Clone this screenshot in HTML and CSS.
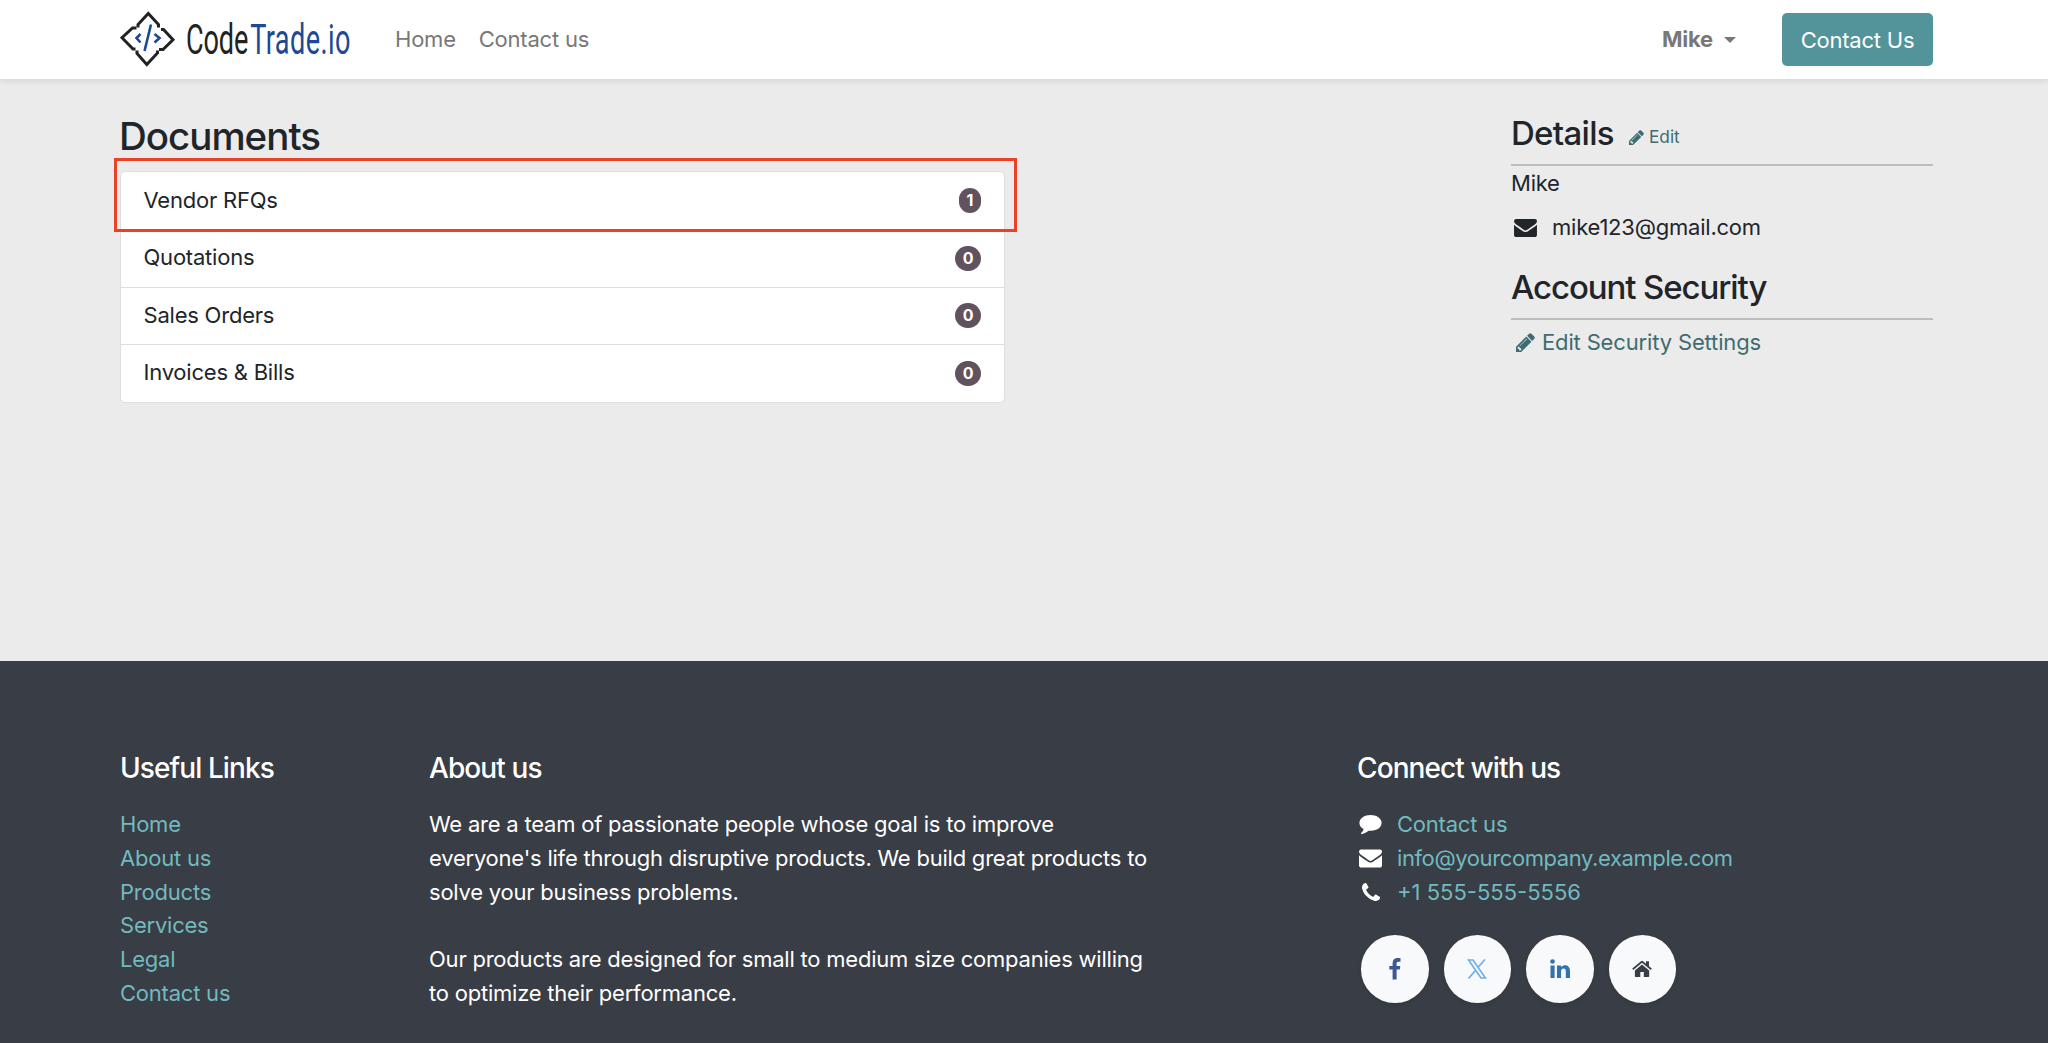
FILE: index.html
```html
<!DOCTYPE html>
<html lang="en">
<head>
  <meta charset="UTF-8">
  <title>My Portal | CodeTrade.io</title>
  <link rel="stylesheet" href="styles.css">
</head>
<body>

  <!-- shared icons -->
  <svg class="sprite">
    <symbol id="pencil" viewBox="0 0 1536 1536">
      <path d="M363 1408l91-91-235-235-91 91v107h128v128h107zM886 480q0-22-22-22-10 0-17 7l-542 542q-7 7-7 17 0 22 22 22 10 0 17-7l542-542q7-7 7-17zM832 288l416 416-832 832H0v-416zM1515 384q0 53-37 90l-166 166-416-416 166-165q36-38 90-38 53 0 91 38l235 234q37 39 37 91z"/>
    </symbol>
    <symbol id="envelope" viewBox="0 0 1792 1408">
      <path d="M1792 454v794q0 66-47 113t-113 47H160q-66 0-113-47T0 1248V454q44 49 101 87 362 246 497 345 57 42 92.500 65.500t94.500 48 110 24.500h2q51 0 110-24.500t94.500-48 92.500-65.500q170-123 498-345 57-39 100-87zM1792 160q0 79-49 151t-122 123q-376 261-468 325-10 7-42.500 30.500t-54 38-52 32.500-57.500 27-50 9h-2q-23 0-50-9t-57.500-27-52-32.500-54-38T639 759q-91-64-262-182.500T172 434q-62-42-117-115.500T0 182q0-78 41.500-130T160 0h1472q65 0 112.500 47t47.500 113z"/>
    </symbol>
  </svg>

  <header class="navbar">
    <a href="#" class="logo">
      <svg width="232" height="60" viewBox="0 0 232 60">
        <g fill="none" stroke="#222" stroke-width="3">
          <path d="M18 18.500V15.500L28.300 4.500L38.500 15.500V18.500"/>
          <path d="M41 20.500H43.500L53 30.700L43 40.500H39"/>
          <path d="M37.500 41.500V44L26.800 55.500L17 44.500V41.500"/>
          <path d="M15.500 40H13L2 28.700L12.500 19H16.500"/>
        </g>
        <g fill="none" stroke="#1d4896" stroke-width="2.600">
          <path d="M20.500 25L16.500 29L20.500 33.500"/>
          <path d="M31 15.500L24.500 42"/>
          <path d="M34.500 25L39.500 29L34.500 33.500"/>
        </g>
        <g transform="translate(66 44.500) scale(.63 1)">
          <text class="logo-text" x="0" y="0" textLength="99" fill="#222">Code</text>
          <text class="logo-text" x="102" y="0" textLength="159" fill="#1d4896">Trade.io</text>
        </g>
      </svg>
    </a>
    <nav class="menu">
      <a href="#">Home</a>
      <a href="#">Contact us</a>
    </nav>
    <a href="#" class="user">Mike</a>
    <a href="#" class="contact-btn">Contact Us</a>
  </header>

  <main class="portal">
    <section class="documents">
      <h2>Documents</h2>
      <div class="doc-list">
        <a href="#" class="highlight">Vendor RFQs <span class="badge">1</span></a>
        <a href="#">Quotations <span class="badge">0</span></a>
        <a href="#">Sales Orders <span class="badge">0</span></a>
        <a href="#">Invoices &amp; Bills <span class="badge">0</span></a>
      </div>
    </section>

    <aside class="details">
      <h3>Details <a href="#" class="edit"><svg><use href="#pencil"/></svg>Edit</a></h3>
      <p class="name">Mike</p>
      <p class="email"><svg><use href="#envelope"/></svg>mike123@gmail.com</p>
      <h3 class="security">Account Security</h3>
      <a href="#" class="security-link"><svg><use href="#pencil"/></svg>Edit Security Settings</a>
    </aside>
  </main>

  <footer class="footer">
    <div class="links">
      <h5>Useful Links</h5>
      <a href="#">Home</a>
      <a href="#">About us</a>
      <a href="#">Products</a>
      <a href="#">Services</a>
      <a href="#">Legal</a>
      <a href="#">Contact us</a>
    </div>
    <div class="about">
      <h5>About us</h5>
      <p>We are a team of passionate people whose goal is to improve<br>everyone's life through disruptive products. We build great products to<br>solve your business problems.</p>
      <p>Our products are designed for small to medium size companies willing<br>to optimize their performance.</p>
    </div>
    <div class="connect">
      <h5>Connect with us</h5>
      <div class="contact-row">
        <svg viewBox="0 0 1792 1536"><path d="M1792 640q0 174-120 321.500t-326 233-450 85.500q-70 0-145-8-198 175-460 242-49 14-114 22-17 2-30.500-9T129 1498v-1q-3-4-.5-12t2-10 4.500-9.500l6-9 7-8.500 8-9q7-8 31-34.500t34.500-38 31-39.500 32.500-51 27-59 26-76q-157-89-247.500-220T0 640q0-130 71-248.500t191-204.500 286-136.500T896 0t348 50.500T1530 187t191 204.500 71 248.500z"/></svg>
        <a href="#">Contact us</a>
      </div>
      <div class="contact-row">
        <svg><use href="#envelope"/></svg>
        <a href="#" class="mail">info@yourcompany.example.com</a>
      </div>
      <div class="contact-row">
        <svg class="phone" viewBox="0 0 1408 1408"><path d="M1408 1112q0 27-10 70.500t-21 68.500q-21 50-122 106-94 51-186 51-27 0-53-3.500t-57.500-12.500-47-14.500T856 1357t-49-18q-98-35-175-83-127-79-264-216T152 776q-48-77-83-175-3-9-18-49t-20.500-55.500-14.500-47T3.500 392 0 339q0-92 51-186Q107 52 157 31q25-11 68.500-21T296 0q14 0 21 3 18 6 53 76 11 19 30 54t35 63.500 31 53.500q3 4 17.500 25t21.500 35.500 7 28.500q0 20-28.500 50t-62 55-62 53-28.500 46q0 9 5 22.500t8.500 20.500 14 24 11.500 19q76 137 174 235t235 174q2 1 19 11.500t24 14 20.500 8.500 22.500 5q18 0 46-28.500t53-62 55-62 50-28.500q14 0 28.500 7t35.500 21.500 25 17.500q25 15 53.500 31t63.500 35 54 30q70 35 76 53 3 7 3 21z"/></svg>
        <a href="#" class="tel">+1 555-555-5556</a>
      </div>
      <div class="social">
        <a href="#" title="Facebook"><svg width="12" height="22" viewBox="0 0 12 22" fill="#3f5795"><path d="M11.500.2V3.700H9.500C8 3.700 7.600 4.400 7.600 5.500V8H11.300L10.800 11.600H7.600V21.500H3.600V11.600H.3V8H3.600V5.100C3.600 1.900 5.600 0 8.600 0C10 0 11 .1 11.500.2Z"/></svg></a>
        <a href="#" title="X"><svg width="20" height="20" viewBox="0 0 20 20" fill="none" stroke="#6fafe8" stroke-width="1.700"><path d="M1.500 1H6L18.500 19H14ZM18 .5L10.700 8.700M9 10.800L1.500 19.500"/></svg></a>
        <a href="#" title="LinkedIn"><svg width="20" height="20" viewBox="0 0 20 20" fill="#2f74b0"><path d="M.5 6.500H4.600V19H.5ZM7 6.500H11.100V8.300C11.800 7.200 12.900 6.200 14.900 6.200C17.900 6.200 20 8.100 20 11.900V19H15.800V12.400C15.800 10.700 15.200 9.600 13.700 9.600C12 9.600 11.100 10.800 11.100 12.300V19H7Z"/><circle cx="2.500" cy="2.500" r="2.300"/></svg></a>
        <a href="#" title="Home"><svg width="20" height="18" viewBox="0 0 20 18" fill="#393d45"><path d="M10 4.500L17.200 10.500V16.200Q17.200 17 16.400 17H11.800V12H8.300V17H3.700Q2.900 17 2.900 16.200V10.500Z"/><path d="M10 .8Q10.600.8 11 1.200L14 3.700V1.200H17V6.200L19.800 8.500L18.700 9.900L10 2.800L1.300 9.900L.2 8.500L9 1.200Q9.400.8 10 .8Z"/></svg></a>
      </div>
    </div>
  </footer>

</body>
</html>
```
FILE: styles.css
```css
*, *::after {
  box-sizing: border-box;
}

body {
  margin: 0;
  height: 1043px;
  overflow: hidden;
  display: flex;
  flex-direction: column;
  font-family: Inter, "Liberation Sans", sans-serif;
  font-size: 22px;
  line-height: 33.8px;
  letter-spacing: -0.22px;
  color: #212529;
  background-color: #ebebeb;
}

a {
  color: inherit;
  text-decoration: none;
}

h2, h3, h5, p {
  margin: 0;
  font-weight: 500;
}

p {
  font-weight: 400;
}

.sprite {
  display: none;
}

/* header */
.navbar {
  display: flex;
  align-items: center;
  height: 79px;
  flex-shrink: 0;
  padding: 0 115px 0 120px;
  background-color: #fff;
  box-shadow: 0 2px 6px rgba(0,0,0,0.1);
  color: #787878;
}

.logo svg {
  display: block;
  margin-top: -1px;
}

.logo-text {
  font-family: Roboto, sans-serif;
  font-size: 43px;
  font-weight: 400;
  letter-spacing: 0;
}

.menu {
  display: flex;
  gap: 23px;
  margin-left: 43px;
  padding-top: 1px;
}

.user {
  display: flex;
  align-items: center;
  margin-left: auto;
  padding-top: 1px;
  font-weight: 700;
}

.user::after {
  content: "";
  margin-left: 11px;
  border: 6px solid transparent;
  border-top-color: #787878;
  border-bottom: 0;
}

.contact-btn {
  width: 151px;
  height: 53px;
  margin-left: 46px;
  line-height: 54px;
  text-align: center;
  color: #fff;
  background-color: #53949a;
  border-radius: 5px;
}

/* portal */
.portal {
  display: flex;
  justify-content: space-between;
  height: 582px;
  flex-shrink: 0;
  padding: 32px 115px 0 120px;
}

.documents {
  width: 885px;
}

.documents h2 {
  margin-left: -1px;
  font-size: 38.500px;
  line-height: 51px;
  letter-spacing: -1px;
}

.doc-list {
  margin-top: 9px;
  border: 1px solid #dedede;
  border-radius: 5px;
  background-color: #fff;
}

.doc-list a {
  display: flex;
  justify-content: space-between;
  align-items: center;
  position: relative;
  height: 57.500px;
  padding: 0 23px 0 22.500px;
}

.doc-list a + a {
  border-top: 1px solid #dedede;
}

.doc-list a:first-child {
  height: 57px;
}

/* frame round the active row */
.highlight::after {
  content: "";
  position: absolute;
  z-index: 1;
  top: -14px;
  left: -7px;
  width: 903px;
  height: 74px;
  border: 3px solid #eb4127;
}

.badge {
  padding: 0 7.500px;
  border-radius: 13px;
  font-size: 16px;
  line-height: 25px;
  font-weight: 700;
  letter-spacing: 0;
  color: #fff;
  background-color: #61525f;
}

.details {
  width: 422px;
}

.details h3 {
  height: 54.500px;
  border-bottom: 2px solid #bdbdbd;
  font-size: 33px;
  line-height: 44px;
  letter-spacing: -0.7px;
}

.details svg {
  fill: currentColor;
}

.edit {
  position: relative;
  top: -2px;
  margin-left: 7px;
  font-size: 17.300px;
  font-weight: 400;
  letter-spacing: 0;
  color: #3e6c70;
}

.edit svg {
  width: 15px;
  height: 15px;
  margin-right: 5px;
  vertical-align: -2px;
}

.name {
  margin-top: 1px;
}

.email {
  display: flex;
  align-items: center;
  margin-top: 11px;
}

.email svg {
  width: 23px;
  height: 18px;
  margin: 0 15px 0 3px;
}

.details .security {
  margin-top: 20px;
  letter-spacing: -1.1px;
}

.security-link {
  display: flex;
  align-items: center;
  margin-top: 6px;
  letter-spacing: -0.15px;
  color: #3e6c70;
}

.security-link svg {
  width: 19px;
  height: 19px;
  margin: 0 7px 0 5px;
}

/* footer */
.footer {
  display: flex;
  flex: 1;
  padding: 88px 115px 0 120px;
  color: #fff;
  background-color: #393d45;
}

.footer h5 {
  margin-bottom: 21px;
  font-size: 28px;
  line-height: 38px;
  letter-spacing: -0.9px;
}

.links {
  width: 309px;
}

.links a {
  display: block;
}

.footer a {
  color: #71babf;
}

.about {
  width: 928px;
}

.about p + p {
  margin-top: 33.800px;
}

.contact-row {
  display: flex;
  align-items: center;
}

.contact-row svg {
  width: 23px;
  height: 19px;
  margin: 0 15px 0 2px;
  fill: #fff;
}

.contact-row .phone {
  width: 18px;
  height: 18px;
  margin: 0 17px 0 5px;
}

.contact-row .mail {
  letter-spacing: -0.4px;
}

.contact-row .tel {
  letter-spacing: 0;
}

.social {
  display: flex;
  gap: 15px;
  margin: 26px 0 0 4px;
}

.social a {
  display: flex;
  justify-content: center;
  align-items: center;
  width: 67.500px;
  height: 67.500px;
  border-radius: 50%;
  background-color: #f8f9fb;
  box-shadow: 0 2px 4px rgba(0,0,0,0.1);
}
```
